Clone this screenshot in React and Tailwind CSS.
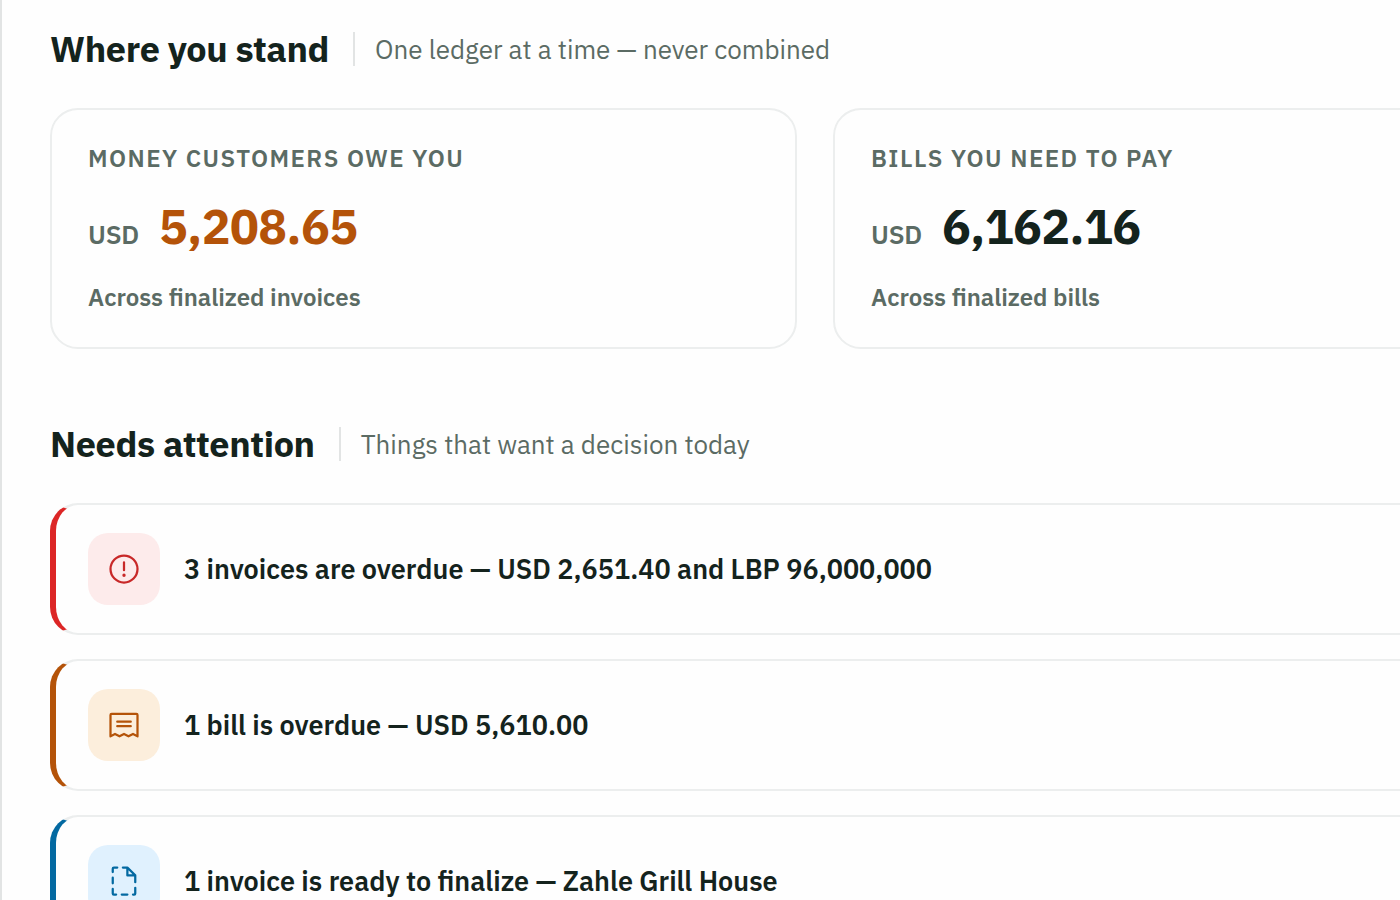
import React from 'react';
import { PiFileDashed, PiReceipt, PiWarningCircle } from 'react-icons/pi';

const balances = [
  { label: 'Money customers owe you', currency: 'USD', amount: '5,208.65', note: 'Across finalized invoices', color: 'text-[#b45309]' },
  { label: 'Bills you need to pay', currency: 'USD', amount: '6,162.16', note: 'Across finalized bills', color: 'text-[#14231d]' },
];

const alerts = [
  {
    text: '3 invoices are overdue — USD 2,651.40 and LBP 96,000,000',
    icon: PiWarningCircle,
    border: 'border-l-[#dc2626]',
    tile: 'bg-[#fdebeb] text-[#c82828]',
  },
  {
    text: '1 bill is overdue — USD 5,610.00',
    icon: PiReceipt,
    border: 'border-l-[#b45309]',
    tile: 'bg-[#fceedc] text-[#b45309]',
  },
  {
    text: '1 invoice is ready to finalize — Zahle Grill House',
    icon: PiFileDashed,
    border: 'border-l-[#0369a1]',
    tile: 'bg-[#e0f1fe] text-[#0369a1]',
  },
];

function App() {
  return (
    <div className="h-screen overflow-hidden border-l-2 border-[#e2e4e4] bg-[#fefefe] pl-12 pt-[22px] font-['IBM_Plex_Sans','Roboto',sans-serif] text-[#14231d]">
      <section>
        <SectionHeading title="Where you stand" hint="One ledger at a time — never combined" />
        <div className="mt-8 grid auto-cols-[minmax(747px,1fr)] grid-flow-col gap-9">
          {balances.map((item) => (
            <BalanceCard key={item.label} {...item} />
          ))}
        </div>
      </section>

      <section className="mt-[68px]">
        <SectionHeading title="Needs attention" hint="Things that want a decision today" />
        {/* Rows run past the right edge, like the cards above */}
        <ul className="mt-8 -mr-9 space-y-6">
          {alerts.map((item) => (
            <AlertRow key={item.text} {...item} />
          ))}
        </ul>
      </section>
    </div>
  );
}

const SectionHeading = ({ title, hint }) => (
  <div className="flex h-[54px] items-center whitespace-nowrap">
    <h2 className="text-[36px] leading-[54px] font-bold tracking-[-0.01em]">{title}</h2>
    <span className="ml-6 h-[34px] w-0.5 bg-[#e2e4e4]" />
    <p className="ml-5 text-[26px] leading-[54px] text-[#5b6b64]">{hint}</p>
  </div>
);

const BalanceCard = ({ label, currency, amount, note, color }) => (
  <article className="flex flex-col gap-5 rounded-[28px] border-2 border-[#eceeee] px-9 py-8">
    <h3 className="text-[24px] leading-8 font-semibold tracking-[0.06em] text-[#5b6b64] uppercase">{label}</h3>
    <p className="flex items-baseline gap-5">
      <span className="text-[26px] leading-9 font-semibold tracking-[-0.01em] text-[#5b6b64]">{currency}</span>
      <span className={`text-[48px] leading-[65px] font-bold tracking-[-0.01em] ${color}`}>{amount}</span>
    </p>
    <p className="text-[24px] leading-9 font-semibold text-[#5b6b64]">{note}</p>
  </article>
);

const AlertRow = ({ text, icon: Icon, border, tile }) => (
  <li className={`flex items-center gap-6 rounded-[28px] border-2 border-l-[6px] border-[#eceeee] px-8 py-7 ${border}`}>
    <span className={`flex size-[72px] shrink-0 items-center justify-center rounded-[20px] ${tile}`}>
      <Icon size={36} />
    </span>
    <p className="text-[27px] leading-9 font-semibold whitespace-nowrap">{text}</p>
  </li>
);

export default App;
